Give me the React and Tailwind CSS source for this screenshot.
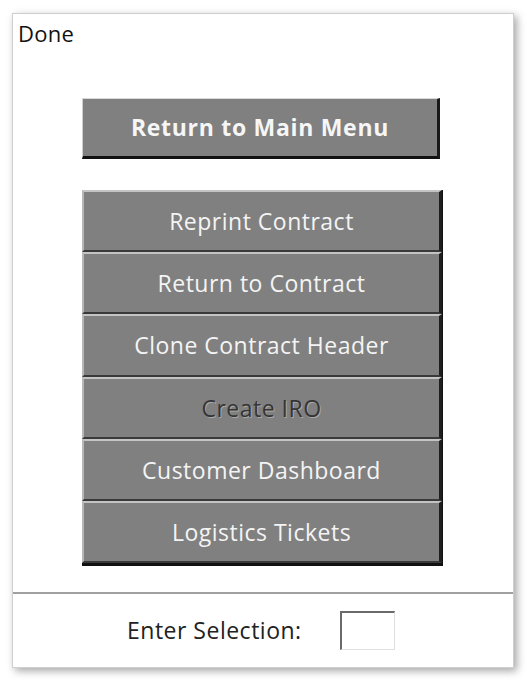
import React from "react";

const font = { fontFamily: '"Open Sans", "Noto Sans", sans-serif' };

function MenuButton({ label, disabled, h }) {
  return (
    <div
      className={`flex items-center justify-center bg-[#808080] border-t-2 border-l-2 border-r-[3px] border-b-2 border-t-[#c4c4c4] border-l-[#b8b8b8] border-r-[#1e1e1e] border-b-[#3a3a3a] ${h}`}
    >
      {disabled ? (
        <span className="text-[23px] tracking-[0.5px] text-[#353535] [text-shadow:1px_1px_0_#a8a8a8]">{label}</span>
      ) : (
        <span className="text-[23px] tracking-[0.5px] text-[#f4f4f4]">{label}</span>
      )}
    </div>
  );
}

export default function App() {
  const items = [
    ["Reprint Contract", false, "h-[62px]"],
    ["Return to Contract", false, "h-[62px]"],
    ["Clone Contract Header", false, "h-[63px]"],
    ["Create IRO", true, "h-[62px]"],
    ["Customer Dashboard", false, "h-[62px]"],
    ["Logistics Tickets", false, "h-[62px]"],
  ];
  return (
    <div className="w-[527px] h-[683px] bg-white pt-[13px] pl-[12px]" style={font}>
      <div className="w-[502px] h-[655px] bg-white border border-[#cfcfcf] shadow-[3px_3px_8px_rgba(0,0,0,0.35)] flex flex-col">
        <div className="pl-[5px] pt-[6px] text-[22px] tracking-[0.3px] leading-[26px] text-[#111]">Done</div>
        <div className="ml-[69px] mt-[52px] w-[358px] h-[61px] flex items-center justify-center bg-[#808080] border-t border-l border-t-[#d8d8d8] border-l-[#d0d0d0] border-r-[3px] border-r-[#1a1a1a] border-b-[3px] border-b-[#111]">
          <span className="text-[23px] tracking-[0.7px] font-bold text-[#f6f6f6]">Return to Main Menu</span>
        </div>
        <div className="ml-[69px] mt-[31px] w-[361px] flex flex-col border-b-[3px] border-b-[#111] border-r border-r-[#111]">
          {items.map(([l, d, h]) => (
            <MenuButton key={l} label={l} disabled={d} h={h} />
          ))}
        </div>
        <div className="mt-[26px] h-[2px] bg-[#a0a0a0]" />
        <div className="flex items-center pt-[17px]">
          <span className="ml-[114px] text-[23px] tracking-[0.5px] text-[#222]">Enter Selection:</span>
          <div className="ml-[38px] w-[55px] h-[39px] bg-white border-t-2 border-l-2 border-t-[#6a6a6a] border-l-[#6a6a6a] border-r border-b border-r-[#e0e0e0] border-b-[#e0e0e0]" />
        </div>
      </div>
    </div>
  );
}
